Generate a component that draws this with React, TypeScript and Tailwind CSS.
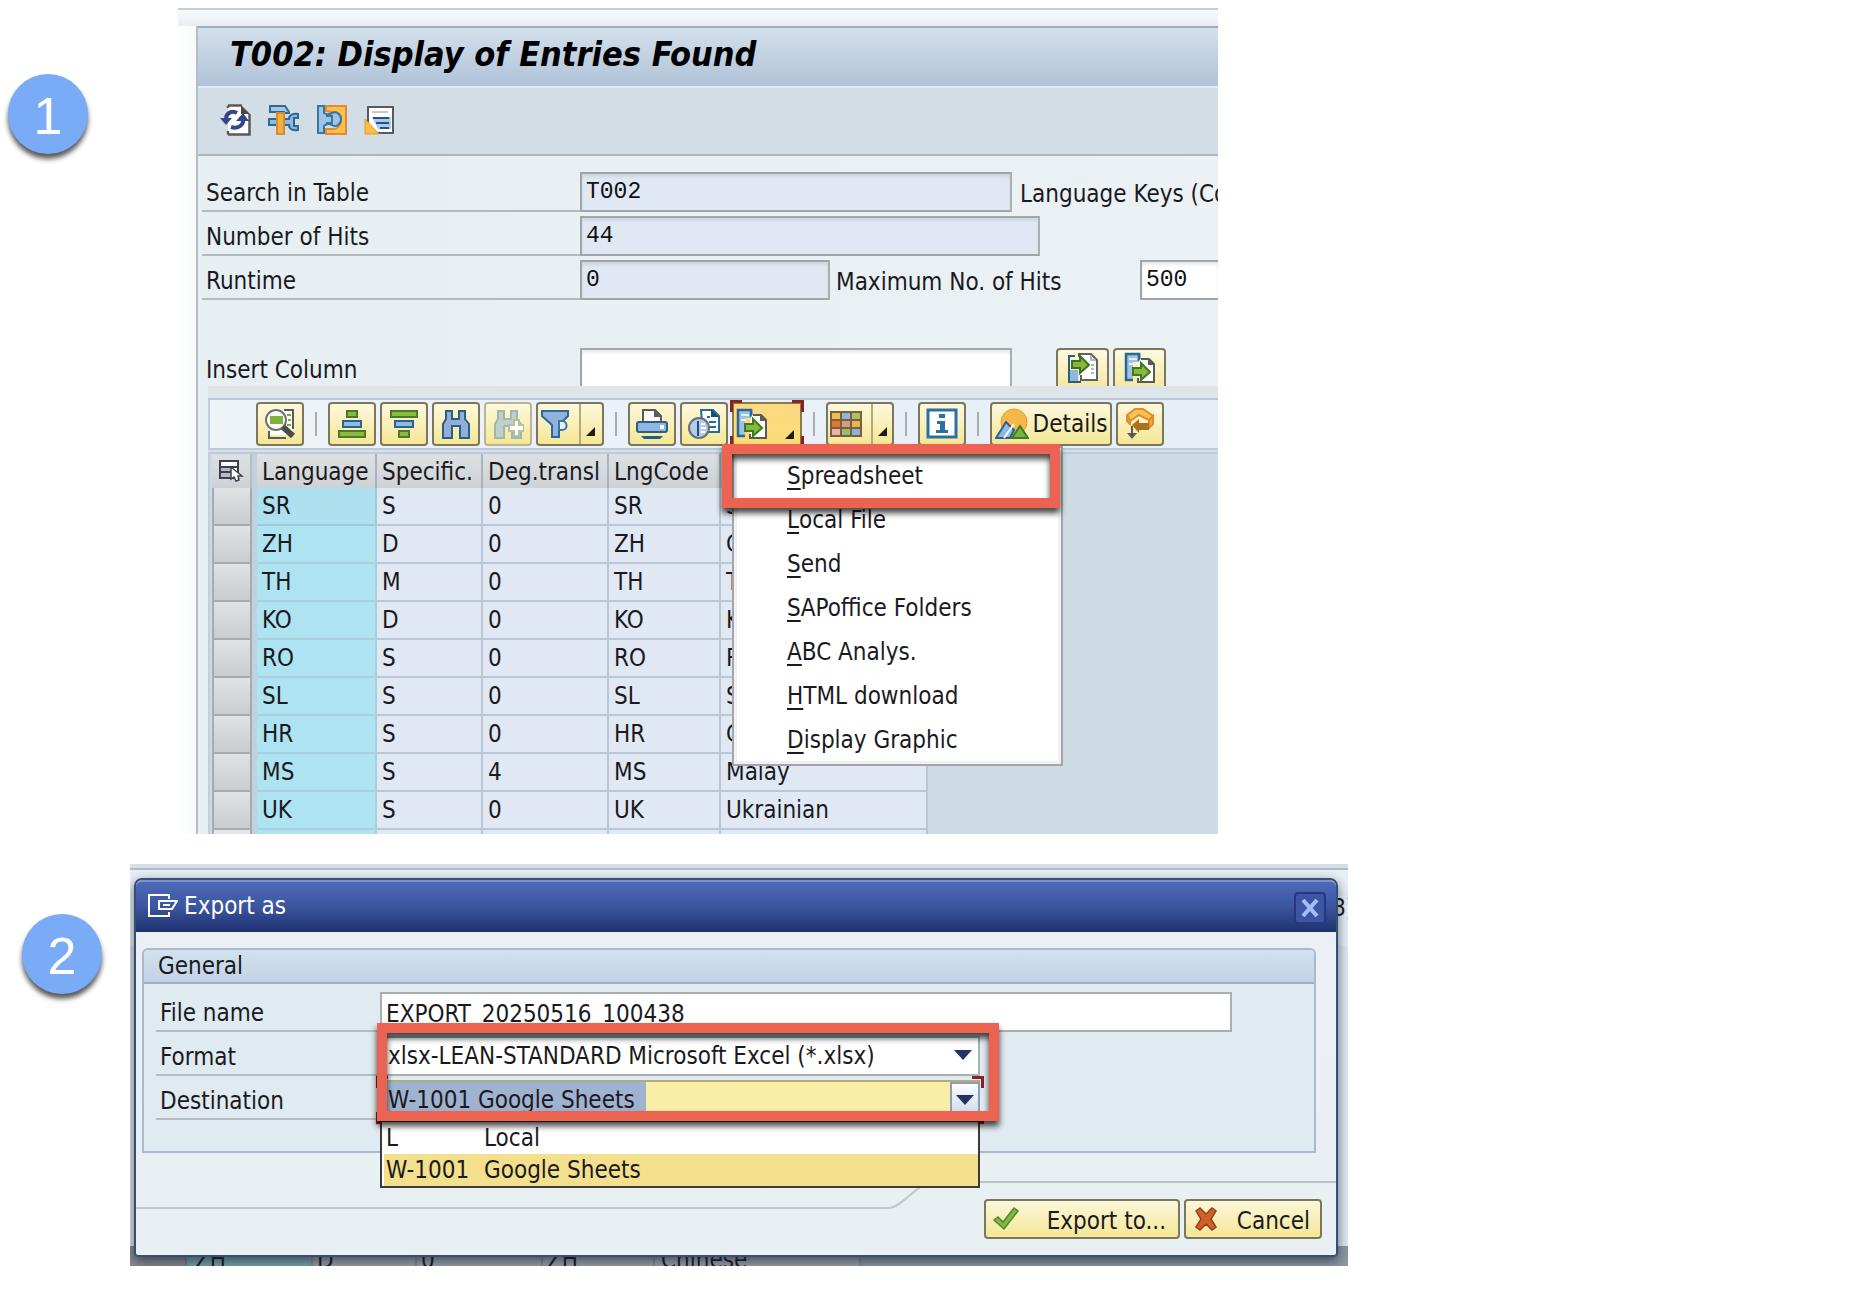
import React from "react";

type IconProps = { children: React.ReactNode; w?: number; h?: number; className?: string };

function Icon({ children, w = 32, h = 32, className = "" }: IconProps) {
  return (
    <svg width={w} height={h} viewBox={`0 0 ${w} ${h}`} className={`shrink-0 ${className}`} aria-hidden="true">
      {children}
    </svg>
  );
}

/* ---------- application toolbar icons ---------- */

const RefreshIcon = () => (
  <Icon>
    <path d="M8 2h14l7 8v20H8z" fill="#fff" />
    <path d="M8 1.500h14M29.500 10v20.500H8M8 4V1.500M8 27v3.500" fill="none" stroke="#5a5a5a" strokeWidth="2.500" />
    <path d="M21 1l9 9h-9z" fill="#4a4a4a" />
    <path d="M6 15c0-6 6-9 11-6" fill="none" stroke="#34468a" strokeWidth="4" />
    <path d="M0 14h12l-6 7z" fill="#34468a" />
    <path d="M23 15c1 7-6 10-12 8" fill="none" stroke="#34468a" strokeWidth="4" />
    <path d="M16 17h13l-6-8z" fill="#34468a" />
  </Icon>
);

const ToolsIcon = () => (
  <Icon>
    <path
      d="M1 15h15v6H1zM16 15h5c0-4 4-6 9-5v4h-4v8h4v4c-5 1-9-1-9-5h-5z"
      fill="#8ebbe0"
      stroke="#2a6a94"
      strokeWidth="2"
    />
    <path d="M2 2h15l4 6v1h-5V8H2z" fill="#a5c8e6" stroke="#2a6a94" strokeWidth="2" />
    <path d="M9 9h7v21H9z" fill="#f7b040" stroke="#d98a2b" strokeWidth="2" />
  </Icon>
);

const ClampIcon = () => (
  <Icon>
    <path d="M10 2h20v28H10v-5h6c4 1 9-3 9-9s-5-9-9-8l-6-1z" fill="#fbc147" stroke="#e5873a" strokeWidth="2" />
    <path
      d="M2 2h6v7c3 2 6 1 8 0 4-2 9 1 9 6s-5 9-9 6c-2-1-5-2-8 1v7H2z"
      fill="#9cc5e8"
      stroke="#3a759e"
      strokeWidth="2"
    />
    <path d="M10 12h6v7h-6" fill="none" stroke="#3a759e" strokeWidth="2" />
  </Icon>
);

const NoteIcon = () => (
  <Icon>
    <path d="M4 3h25v26H4z" fill="#fff" stroke="#5a5a5a" strokeWidth="2" />
    <path d="M8 8h16" stroke="#c5c9cc" strokeWidth="2" />
    <path d="M8 13h19v12H14z" fill="#a9cdea" />
    <path d="M9 14h16M12 19h13M16 24h9" stroke="#2c4f86" strokeWidth="2" />
    <path d="M1 15v15h14z" fill="#f9bf45" stroke="#e0992f" strokeWidth="1" />
  </Icon>
);

/* ---------- form buttons ---------- */

const ImportIcon = () => (
  <Icon>
    <path d="M12 3h12l6 6v19H12z" fill="#fff" />
    <path d="M12 5V2h12l6 6v20H14v-5" fill="none" stroke="#5a6468" strokeWidth="2" />
    <path d="M2 18h9v12H2z" fill="#8fb8de" />
    <path d="M8 4H2v26h12" fill="none" stroke="#256080" strokeWidth="2" />
    <path d="M24 3v5h5M24 13h3M24 17h3M24 21h3" fill="none" stroke="#9ba1a5" strokeWidth="1.500" />
    <path d="M5 9h8V4l9 9-9 8v-5H5z" fill="#86b83c" stroke="#3f6f22" strokeWidth="2" />
  </Icon>
);

const ExportIcon = () => (
  <Icon>
    <path d="M2 2h15v8H9v17H2z" fill="#9cc2e6" />
    <path d="M15 9V2H2v26h7" fill="none" stroke="#2d6690" strokeWidth="2.500" />
    <path d="M5 7h8M5 12h5" stroke="#e4f0fa" strokeWidth="2" />
    <path d="M16 7h9l6 6v17H14V12z" fill="#fff" />
    <path d="M17 7h8l5 5v18H14v-4" fill="none" stroke="#5a5a5a" strokeWidth="2" />
    <path d="M24 6l7 7h-7z" fill="#5a5a5a" />
    <path d="M9 16h8v-5l9 9-9 8v-5H9z" fill="#86b83c" stroke="#3f7a22" strokeWidth="2" />
  </Icon>
);

/* ---------- list toolbar icons ---------- */

const DetailIcon = () => (
  <Icon>
    <path d="M18 3h11v24H6v-9z" fill="#fff" />
    <path d="M20 2h9v19M5 23v7h17" fill="none" stroke="#5a5a5a" strokeWidth="2" />
    <path d="M23 7h4M24 12h3M23 17h4" stroke="#7fab38" strokeWidth="2" />
    <circle cx="12" cy="12" r="10" fill="#f7fbf4" stroke="#6d7276" strokeWidth="2" />
    <path d="M6 8h13v8H6z" fill="#7fb23a" />
    <path d="M19 19l10 9" stroke="#4c4c4c" strokeWidth="6" />
  </Icon>
);

const SortAscIcon = () => (
  <Icon>
    <rect x="11" y="3" width="10" height="6" fill="#8cba3e" stroke="#4c7a2c" strokeWidth="2" />
    <rect x="7" y="13" width="18" height="6" fill="#8ebce6" stroke="#2a648c" strokeWidth="2" />
    <rect x="3" y="23" width="26" height="6" fill="#8cba3e" stroke="#4c7a2c" strokeWidth="2" />
  </Icon>
);

const SortDescIcon = () => (
  <Icon>
    <rect x="3" y="3" width="26" height="6" fill="#8cba3e" stroke="#4c7a2c" strokeWidth="2" />
    <rect x="7" y="13" width="18" height="6" fill="#8ebce6" stroke="#2a648c" strokeWidth="2" />
    <rect x="11" y="23" width="10" height="6" fill="#8cba3e" stroke="#4c7a2c" strokeWidth="2" />
  </Icon>
);

const BINOCULARS = "M6 3h6v8h7V3h6v8l4 5v14h-9V18h-8v12H3V16l3-5z";

const FindIcon = () => (
  <Icon>
    <path d={BINOCULARS} fill="#92aedb" stroke="#2a6084" strokeWidth="2" />
  </Icon>
);

const FindNextIcon = () => (
  <Icon>
    <path d={BINOCULARS} fill="#c0cfc9" stroke="#9fb8ae" strokeWidth="2" />
    <path d="M22 12h5v5h5v6h-5v5h-5v-5h-5v-6h5z" fill="#fffef0" stroke="#b9bfa4" strokeWidth="2" />
  </Icon>
);

const FilterIcon = () => (
  <Icon w={30}>
    <path d="M1 3h26v5l-9 9v12h-7V17L1 8z" fill="#8fb2df" stroke="#2a6a94" strokeWidth="2" />
    <path d="M18 22v-9h3c6 0 6 9 0 9z" fill="#e9f2f4" stroke="#3a7aa2" strokeWidth="2" />
  </Icon>
);

const PrintIcon = () => (
  <Icon>
    <path d="M7 14V2h12l6 6v6z" fill="#fff" stroke="#5a5a5a" strokeWidth="2" />
    <path d="M18 2l7 7h-7z" fill="#5a5a5a" />
    <rect x="1" y="14" width="30" height="10" rx="2" fill="#8fb6e3" stroke="#2a5f86" strokeWidth="2" />
    <rect x="24" y="17" width="4" height="4" fill="#fff" />
    <path d="M5 28h22l-3 3H8z" fill="#1f5f8a" />
  </Icon>
);

const ViewIcon = () => (
  <Icon w={34}>
    <path d="M14 2h12l6 6v16H16z" fill="#fff" stroke="#2a6a94" strokeWidth="2" />
    <path d="M24 1l8 8h-8z" fill="#164f74" />
    <path d="M20 9h3M22 14h7M22 19h7" stroke="#2a6a94" strokeWidth="2" />
    <circle cx="12" cy="20" r="10" fill="#b4cbea" stroke="#6a6f74" strokeWidth="2" />
    <path d="M11 13v15" stroke="#1f4f7a" strokeWidth="2" />
    <path d="M14 16h4M14 20h5M14 24h4" stroke="#fff" strokeWidth="2" />
  </Icon>
);

const LAYOUT_COLORS = [
  ["#efbd55", "#8fb4e0", "#a9c069"],
  ["#d9773a", "#cf9d88", "#e5b84a"],
  ["#e6b3a8", "#93bf6a", "#8db1dd"],
];

const LayoutIcon = () => (
  <Icon w={34} h={28}>
    <rect x="1" y="1" width="32" height="26" fill="#7d5d3c" />
    {LAYOUT_COLORS.map((row, r) =>
      row.map((c, i) => <rect key={`${r}-${i}`} x={3 + i * 10} y={3 + r * 8} width="8" height="6" fill={c} />),
    )}
  </Icon>
);

const InfoIcon = () => (
  <Icon>
    <rect x="2" y="2" width="28" height="27" fill="#fff" stroke="#2a70a8" strokeWidth="3" />
    <path d="M13 6h6v4h-6zM11 13h8v9h3v3H10v-3h4v-6h-3z" fill="#2a70a8" />
  </Icon>
);

const DetailsIcon = () => (
  <Icon w={34}>
    <circle cx="19" cy="14" r="13" fill="#f7b84b" stroke="#e79a30" strokeWidth="1" />
    <path d="M1 30l10-16 8 8-4 8z" fill="#8db9e3" stroke="#2a5f96" strokeWidth="2" />
    <path d="M17 30l8-12 8 12z" fill="#79b541" stroke="#3f7a2c" strokeWidth="2" />
    <path d="M9 30l10-14" stroke="#fff" strokeWidth="2" />
  </Icon>
);

const ThreadIcon = () => (
  <Icon>
    <path d="M3 7l8-6h8l10 7-4 4-10-5-9 6z" fill="#f9c254" stroke="#dc8f2a" strokeWidth="2" />
    <path d="M25 12l4-4v8l-4 4zM3 7l3 6v3l-3-3z" fill="#f5a93c" stroke="#dc8f2a" strokeWidth="2" />
    <path d="M8 17l7-6v4h10v7H15v3z" fill="#a8731c" />
    <path d="M8 18v9" stroke="#5a5a5a" strokeWidth="2" />
    <path d="M3 25h10l-5 6z" fill="#5a5a5a" />
  </Icon>
);

const SelectAllIcon = () => (
  <Icon w={26} h={24}>
    <path d="M2 2h18v17H2z" fill="#fff" stroke="#3d3f4e" strokeWidth="2" />
    <path d="M3 9h10v9H3z" fill="#b7bbc6" />
    <path d="M2 8h18M2 13h11" stroke="#3d3f4e" strokeWidth="2" />
    <path d="M13 8v12l3-2 2 4 3-1-1-4h4z" fill="#fff" stroke="#3d3f4e" strokeWidth="1.500" />
  </Icon>
);

const WindowIcon = () => (
  <Icon w={30} h={24}>
    <path d="M21 5V1H1v21h20v-4" fill="none" stroke="#fff" strokeWidth="2" />
    <path d="M11 7h18l-5 8H11zM11 7v8" fill="none" stroke="#fff" strokeWidth="2" />
    <path d="M15 11h7" stroke="#fff" strokeWidth="2" />
  </Icon>
);

const CheckIcon = () => (
  <Icon w={28} h={24}>
    <path d="M2 13l4-3 5 5L22 1l4 3-14 18z" fill="#84b83a" stroke="#4f8a2f" strokeWidth="1.500" />
  </Icon>
);

const CrossIcon = () => (
  <Icon w={24} h={24}>
    <path
      d="M2 4l4-3 6 6 6-6 4 3-5 8 5 8-4 3-6-6-6 6-4-3 5-8z"
      fill="#d2602c"
      stroke="#94401c"
      strokeWidth="1.500"
    />
  </Icon>
);

/* ---------- building blocks ---------- */

const Corner = ({ className }: { className: string }) => (
  <span className={`pointer-events-none absolute size-3 border-[#8c1f27] ${className}`} />
);

const Highlight = ({ className }: { className: string }) => (
  <div
    className={`pointer-events-none absolute border-10 border-[#ec6352] drop-shadow-[0_5px_3px_rgba(0,0,0,0.75)] ${className}`}
  />
);

const DropMark = ({ className = "" }: { className?: string }) => (
  <svg width="9" height="9" viewBox="0 0 9 9" className={className} aria-hidden="true">
    <path d="M9 0v9H0z" fill="#1c1c14" />
  </svg>
);

const DownArrow = () => (
  <svg width="18" height="10" viewBox="0 0 18 10" aria-hidden="true">
    <path d="M0 0h18L9 10z" fill="#24335f" />
  </svg>
);

const ToolButton = ({
  label,
  drop = false,
  faded = false,
  children,
}: {
  label: string;
  drop?: boolean;
  faded?: boolean;
  children: React.ReactNode;
}) => (
  <button
    type="button"
    aria-label={label}
    className={`flex h-11 shrink-0 items-center justify-center rounded border-2 bg-linear-to-b from-[#fdf8dc] to-[#f5e795] ${
      faded ? "border-[#b9b596]" : "border-[#7b775f]"
    } ${drop ? "w-17" : "w-12"}`}
  >
    {children}
    {drop && (
      <span className="ml-2 flex h-full w-5 items-end justify-end border-l-2 border-[#b3a979] pb-2 pr-1">
        <DropMark />
      </span>
    )}
  </button>
);

const Separator = () => <span className="mx-[11px] h-6 w-0.5 shrink-0 bg-[#a9adaf]" />;

const FIELD =
  "h-10 border-2 border-[#9fa6a9] border-r-[#a9b0b3] px-1 font-['Liberation_Mono',monospace] text-[23px] text-[#111] shadow-[inset_0_3px_3px_rgba(0,0,0,0.08)] outline-none";

const ROWS = [
  ["SR", "S", "0", "SR", "Serbian"],
  ["ZH", "D", "0", "ZH", "Chinese"],
  ["TH", "M", "0", "TH", "Thai"],
  ["KO", "D", "0", "KO", "Korean"],
  ["RO", "S", "0", "RO", "Romanian"],
  ["SL", "S", "0", "SL", "Slovenian"],
  ["HR", "S", "0", "HR", "Croatian"],
  ["MS", "S", "4", "MS", "Malay"],
  ["UK", "S", "0", "UK", "Ukrainian"],
];

const MENU = [
  "Spreadsheet",
  "Local File",
  "Send",
  "SAPoffice Folders",
  "ABC Analys.",
  "HTML download",
  "Display Graphic",
];

const StepBadge = ({ n, className }: { n: number; className: string }) => (
  <div
    className={`flex size-20 shrink-0 items-center justify-center rounded-full bg-[#7aabf7] pt-1 font-['Liberation_Sans',sans-serif] text-[52px] leading-none text-white shadow-[0_5px_5px_rgba(0,0,0,0.65)] ${className}`}
  >
    {n}
  </div>
);

const FormLabel = ({ htmlFor, children }: { htmlFor: string; children: React.ReactNode }) => (
  <label
    htmlFor={htmlFor}
    className="flex h-10 w-[378px] shrink-0 items-center border-b-2 border-[#b3b9bc] pt-1 pl-1 whitespace-nowrap"
  >
    {children}
  </label>
);

function ExportMenu() {
  return (
    <div className="relative h-11 w-[70px] shrink-0">
      <button
        type="button"
        aria-label="Export"
        aria-haspopup="menu"
        aria-expanded="true"
        className="flex h-11 w-full items-center justify-between border-2 border-[#8c7b45] bg-linear-to-b from-[#fbd985] to-[#fbdc74] pl-0.5 pr-1.5"
      >
        <ExportIcon />
        <DropMark className="mt-5" />
      </button>
      <Corner className="-top-0.5 -left-0.5 border-t-3 border-l-3" />
      <Corner className="-top-0.5 -right-0.5 border-t-3 border-r-3" />
      <Corner className="-bottom-0.5 -left-0.5 border-b-3 border-l-3" />
      <Corner className="-right-0.5 -bottom-0.5 border-r-3 border-b-3" />
      <ul
        role="menu"
        className="absolute top-full left-0 z-10 w-[331px] border-2 border-[#a3a5a8] bg-white pt-1.5 pb-0.5 shadow-[inset_0_0_0_3px_#f2f0f2]"
      >
        {MENU.map((item) => (
          <li key={item} role="none">
            <button type="button" role="menuitem" className="flex h-11 w-full items-center pl-[53px] whitespace-nowrap">
              <span className="underline decoration-2 underline-offset-4">{item[0]}</span>
              {item.slice(1)}
            </button>
          </li>
        ))}
      </ul>
      <Highlight className="top-[42px] -left-2.5 z-20 h-16 w-[338px]" />
    </div>
  );
}

function EntriesWindow() {
  return (
    <div className="max-w-[1040px] flex-1 overflow-hidden bg-linear-to-r from-white to-[#f5f8fa] to-2%">
      <div className="h-[18px] border-t-2 border-[#c9cdd2] bg-linear-to-b from-[#f8fafc] to-[#e9edf4]" />
      <div className="ml-[18px] border-l-2 border-[#b4bcc6] bg-linear-to-r from-[#e7eff3] to-[#ebf1f5]">
        <h1 className="flex h-[62px] items-center border-t-2 border-b-2 border-t-[#9fabb8] border-b-[#dfebf5] bg-linear-to-b from-[#d3e0ec] to-[#b0c3d8] pb-1.5 pl-8 text-[34px] font-bold text-black italic">
          T002: Display of Entries Found
        </h1>
        <div className="flex h-[68px] items-center gap-4 border-b-2 border-[#adb6be] bg-[#d3dde6] pb-0.5 pl-[22px]">
          <button type="button" aria-label="Refresh"><RefreshIcon /></button>
          <button type="button" aria-label="Settings"><ToolsIcon /></button>
          <button type="button" aria-label="Check"><ClampIcon /></button>
          <button type="button" aria-label="Notes"><NoteIcon /></button>
        </div>
        <form className="flex flex-col gap-1 overflow-hidden pt-4 pl-1" onSubmit={(e) => e.preventDefault()}>
          <div className="flex items-center">
            <FormLabel htmlFor="table">Search in Table</FormLabel>
            <input id="table" readOnly defaultValue="T002" className={`${FIELD} w-[432px] shrink-0 bg-[#e0e9f3]`} />
            <span className="w-0 pt-1 pl-2 whitespace-nowrap">Language Keys (Component BC-I18)</span>
          </div>
          <div className="flex items-center">
            <FormLabel htmlFor="hits">Number of Hits</FormLabel>
            <input id="hits" readOnly defaultValue="44" className={`${FIELD} w-[460px] bg-[#e0e9f3]`} />
          </div>
          <div className="flex items-center">
            <FormLabel htmlFor="runtime">Runtime</FormLabel>
            <input id="runtime" readOnly defaultValue="0" className={`${FIELD} w-[250px] shrink-0 bg-[#e0e9f3]`} />
            <label htmlFor="max" className="w-[310px] shrink-0 pt-1 pl-1.5 whitespace-nowrap">
              Maximum No. of Hits
            </label>
            <input id="max" defaultValue="500" className={`${FIELD} w-0 flex-1 border-r-0 bg-white`} />
          </div>
          <div className="mt-11 flex h-[38px] items-start overflow-hidden">
            <label htmlFor="insert" className="flex h-10 w-[378px] shrink-0 items-center pt-1 pl-1 whitespace-nowrap">
              Insert Column
            </label>
            <input id="insert" className={`${FIELD} w-[432px] shrink-0 bg-white`} />
            <div className="ml-11 flex gap-1">
              {[
                { label: "Insert column", icon: <ImportIcon /> },
                { label: "Remove column", icon: <ExportIcon /> },
              ].map(({ label, icon }) => (
                <button
                  key={label}
                  type="button"
                  aria-label={label}
                  className="flex h-11 w-[53px] shrink-0 justify-center rounded border-2 border-[#7b775f] bg-linear-to-b from-[#fdf9e2] to-[#f5e798] pt-0.5"
                >
                  {icon}
                </button>
              ))}
            </div>
          </div>
        </form>
        <div className="ml-2.5">
          <div className="h-3.5 border-b-2 border-[#b9c7d6] bg-[#dde4ea]" />
          <div className="flex h-12 items-center border-l-2 border-[#c2cedb] bg-linear-to-r from-[#eef3f8] to-[#e6eef6] pl-[46px]">
            <ToolButton label="Details view"><DetailIcon /></ToolButton>
            <Separator />
            <div className="flex gap-1">
              <ToolButton label="Sort ascending"><SortAscIcon /></ToolButton>
              <ToolButton label="Sort descending"><SortDescIcon /></ToolButton>
              <ToolButton label="Find"><FindIcon /></ToolButton>
              <ToolButton label="Find next" faded><FindNextIcon /></ToolButton>
              <ToolButton label="Filter" drop><FilterIcon /></ToolButton>
            </div>
            <Separator />
            <div className="flex gap-1">
              <ToolButton label="Print"><PrintIcon /></ToolButton>
              <ToolButton label="Views"><ViewIcon /></ToolButton>
              <ExportMenu />
            </div>
            <Separator />
            <ToolButton label="Layout" drop><LayoutIcon /></ToolButton>
            <Separator />
            <ToolButton label="Information"><InfoIcon /></ToolButton>
            <Separator />
            <div className="flex gap-1">
              <button
                type="button"
                className="flex h-11 w-[122px] items-center justify-center gap-1 rounded border-2 border-[#7b775f] bg-linear-to-b from-[#fdf8dc] to-[#f5e795] whitespace-nowrap"
              >
                <DetailsIcon />
                Details
              </button>
              <ToolButton label="Thread"><ThreadIcon /></ToolButton>
            </div>
          </div>
          <div className="h-1.5 border-y-2 border-[#bccad9] bg-[#d5e0ea]" />
          <div className="border-l-2 border-[#c2cedb] bg-[#cddbe5] pl-0.5">
            <table className="w-[716px] table-fixed border-separate border-spacing-0">
              <colgroup>
                <col className="w-10" />
                <col className="w-[5px]" />
                <col className="w-[120px]" />
                <col className="w-[106px]" />
                <col className="w-[126px]" />
                <col className="w-[112px]" />
                <col />
              </colgroup>
              <thead>
                <tr className="h-[34px] bg-linear-to-b from-[#dde1e4] to-[#cdd2d6] text-left leading-none whitespace-nowrap">
                  <th aria-label="Select all" className="border-r-2 border-[#b5bcc6] p-0 pl-1.5 align-middle">
                    <SelectAllIcon />
                  </th>
                  <th className="bg-[#c3cfdc] p-0" />
                  {["Language", "Specific.", "Deg.transl", "LngCode", ""].map((h) => (
                    <th key={h} className="border-r-2 border-[#a9b3bf] p-0 pt-0.5 pl-[5px] font-normal">
                      {h}
                    </th>
                  ))}
                </tr>
              </thead>
              <tbody>
                {ROWS.map((row, r) => (
                  <tr key={row[0]} className="h-[38px] leading-none">
                    <td className="border-2 border-t-0 border-[#a5abb0] bg-linear-to-b from-[#e0e3e5] to-[#c9cdd0] p-0" />
                    <td className="bg-[#c3d0de] p-0" />
                    {row.map((cell, i) => (
                      <td
                        key={i}
                        className={`border-r-2 border-b-2 p-0 pl-[5px] whitespace-nowrap ${
                          i === 0
                            ? r === 0
                              ? "border-[#9fcbd9] bg-[#ade1ef]"
                              : "border-[#a9cfdf] bg-[#aee4f1]"
                            : "border-[#bcc7d5] bg-[#e0e9f3]"
                        }`}
                      >
                        {cell}
                      </td>
                    ))}
                  </tr>
                ))}
                <tr className="h-1">
                  <td className="border-x-2 border-[#a5abb0] bg-[#e4e7e9] p-0" />
                  <td className="bg-[#c3d0de] p-0" />
                  <td className="border-r-2 border-[#a9cfdf] bg-[#aee4f1] p-0" />
                  {[0, 1, 2, 3].map((i) => (
                    <td key={i} className="border-r-2 border-[#bcc7d5] bg-[#e0e9f3] p-0" />
                  ))}
                </tr>
              </tbody>
            </table>
          </div>
        </div>
      </div>
    </div>
  );
}

const DIALOG_LABEL = "flex h-10 w-56 shrink-0 items-center border-b-2 border-[#b4bcc1] pt-1 pl-1 whitespace-nowrap";

function ExportDialog() {
  return (
    <div className="relative max-w-[1218px] flex-1 overflow-hidden bg-[#dfe8ef]">
      <div aria-hidden="true" className="absolute inset-0 flex flex-col justify-between">
        <div>
          <div className="h-1.5 border-b-2 border-[#b3bcc5] bg-[#d3dee6]" />
          <div className="flex h-[76px] items-center justify-end bg-[#e8f0f6]">
            <span className="w-4">8]</span>
          </div>
        </div>
        <div className="flex h-5 items-center overflow-hidden bg-[#8c98a3] leading-7">
          <span className="h-full w-[57px] border-r-2 border-[#777d84] bg-[#878b8e]" />
          <span className="h-full w-[124px] bg-[#78a3ad] pl-2">ZH</span>
          <span className="h-full w-[106px] border-x-2 border-[#838c96] bg-[#9ba1a9] pl-1">D</span>
          <span className="h-full w-[126px] border-r-2 border-[#838c96] bg-[#9ba1a9] pl-1">0</span>
          <span className="h-full w-[112px] border-r-2 border-[#838c96] bg-[#9ba1a9] pl-1">ZH</span>
          <span className="h-full w-[206px] border-r-2 border-[#838c96] bg-[#9ba1a9] pl-1.5">Chinese</span>
        </div>
      </div>

      <section
        role="dialog"
        aria-labelledby="dialog-title"
        className="relative mt-3.5 mr-2.5 mb-[9px] ml-1 rounded-t-lg rounded-b border-2 border-[#3a4d73] bg-linear-to-b from-[#eaf0f5] to-[#e9f0f3] shadow-[0_4px_12px_rgba(20,30,45,0.65)]"
      >
        <header className="flex h-[52px] items-center justify-between rounded-t-md border-t-2 border-[#7d93cc] bg-linear-to-b from-[#4c6bb9] via-[#3b559e] to-[#1e3170] pr-2.5 pb-0.5 pl-3 text-white">
          <h2 id="dialog-title" className="flex items-center gap-1.5">
            <WindowIcon />
            Export as
          </h2>
          <button
            type="button"
            aria-label="Close"
            className="mt-1 flex size-8 items-center justify-center rounded border-2 border-[#27397a] bg-[#3d56a4]"
          >
            <svg width="18" height="18" viewBox="0 0 18 18" aria-hidden="true">
              <path d="M2 1l14 16M16 1L2 17" stroke="#a4bdf5" strokeWidth="4" />
            </svg>
          </button>
        </header>

        <fieldset className="mt-4 mr-5 ml-1.5 rounded-t-md border-2 border-[#a9bace] bg-[#dfeaf1]">
          <div className="flex h-[34px] items-center rounded-t border-b-2 border-[#9db1c9] bg-linear-to-b from-[#d3e1ee] to-[#c2d3e6] pl-3.5">
            General
          </div>
          <div className="flex flex-col gap-1 pt-2 pr-[82px] pb-[31px] pl-3">
            <div className="flex">
              <label htmlFor="file" className={DIALOG_LABEL}>File name</label>
              <input
                id="file"
                defaultValue="EXPORT_20250516_100438"
                className="h-10 w-0 flex-1 border-2 border-[#a9aeb1] bg-white px-1 pt-1 outline-none"
              />
            </div>
            <div className="flex">
              <label htmlFor="format" className={DIALOG_LABEL}>Format</label>
              <div className="relative w-[600px]">
                <select
                  id="format"
                  className="h-10 w-full appearance-none border-2 border-[#a9aeb1] bg-white px-1.5 outline-none"
                >
                  <option>xlsx-LEAN-STANDARD Microsoft Excel (*.xlsx)</option>
                </select>
                <span className="pointer-events-none absolute top-3.5 right-2">
                  <DownArrow />
                </span>
              </div>
            </div>
            <div className="flex">
              <label htmlFor="destination" className={DIALOG_LABEL}>Destination</label>
              <div className="relative w-[600px]">
                <select
                  id="destination"
                  className="h-10 w-full appearance-none border-2 border-[#b3ac80] bg-[linear-gradient(to_right,#9fb2d0_264px,#faeea6_264px)] px-1.5 outline-none"
                >
                  <option>W-1001 Google Sheets</option>
                </select>
                <span className="pointer-events-none absolute top-0.5 right-0 flex h-9 w-7.5 items-center justify-center border-2 border-[#8d9bb5] bg-linear-to-b from-[#fbfcfe] to-[#ccdaea]">
                  <DownArrow />
                </span>
                <Corner className="-top-1 -left-1 border-t-3 border-l-3" />
                <Corner className="-top-1 -right-1 border-t-3 border-r-3" />
                <Corner className="-bottom-1 -left-1 border-b-3 border-l-3" />
                <Corner className="-right-1 -bottom-1 border-r-3 border-b-3" />
                <ul
                  role="listbox"
                  aria-label="Destination options"
                  className="absolute top-full left-0 w-full border-2 border-[#3b3b3b] bg-white pl-0.5"
                >
                  <li role="option" aria-selected="false" className="flex h-8 items-center pl-0.5">
                    <span className="w-[98px]">L</span>Local
                  </li>
                  <li role="option" aria-selected="true" className="flex h-8 items-center bg-[#f4df8c] pl-0.5">
                    <span className="w-[98px]">W-1001</span>Google Sheets
                  </li>
                </ul>
                <Highlight className="-top-[57px] -left-[3px] h-[98px] w-[622px]" />
              </div>
            </div>
          </div>
        </fieldset>

        <div className="mt-7 flex h-7">
          <span className="flex-1 border-b-2 border-[#c0c8cd]" />
          <svg width="44" height="28" viewBox="0 0 44 28" aria-hidden="true">
            <path d="M0 27C12 27 30 1 44 1" fill="none" stroke="#c0c8cd" strokeWidth="2" />
          </svg>
          <span className="w-[403px] border-t-2 border-[#b9c1c7]" />
        </div>
        <footer className="-mt-2.5 flex justify-end gap-1 pr-3.5 pb-4">
          <button
            type="button"
            className="relative flex h-10 w-[196px] items-center justify-between rounded border-2 border-[#7b775f] bg-linear-to-b from-[#fcf7da] to-[#f5e794] pr-3 pl-1.5"
          >
            <CheckIcon />
            <span className="pt-1">Export to...</span>
          </button>
          <button
            type="button"
            className="relative flex h-10 w-[138px] items-center justify-between rounded border-2 border-[#7b775f] bg-linear-to-b from-[#fcf7da] to-[#f5e794] pr-2.5 pl-2"
          >
            <CrossIcon />
            <span className="pt-1">Cancel</span>
          </button>
        </footer>
      </section>
    </div>
  );
}

export default function App() {
  return (
    <main className="min-h-screen bg-white pt-2 font-['DejaVu_Sans_Condensed','DejaVu_Sans',sans-serif] text-[24px] leading-7 text-[#1a1a1e]">
      <section className="flex items-start gap-[90px] pl-2">
        <StepBadge n={1} className="mt-[66px]" />
        <EntriesWindow />
      </section>
      <section className="mt-[30px] flex items-start gap-7 pl-[22px]">
        <StepBadge n={2} className="mt-[50px]" />
        <ExportDialog />
      </section>
    </main>
  );
}
